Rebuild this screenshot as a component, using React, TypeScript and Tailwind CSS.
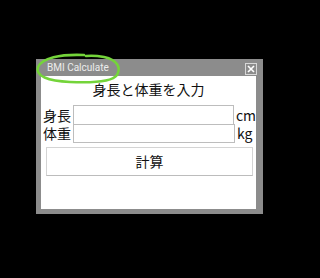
import React from 'react'

const jp = { fontFamily: '"Noto Sans CJK JP", "Noto Sans", sans-serif' }

function Scribble() {
  // hand-drawn highlight around the window title
  return (
    <svg className="absolute left-0 top-0 pointer-events-none" width="320" height="278" viewBox="0 0 320 278">
      <path
        d="M84 55 C 60 54, 42 58, 38 67 C 35 76, 48 81, 70 82 C 92 83, 112 82, 117 75 C 121 68, 118 60, 104 57 C 96 55.5, 90 55.5, 86 56"
        fill="none"
        stroke="#74d43a"
        strokeWidth="2.6"
        strokeLinecap="round"
      />
    </svg>
  )
}

function Row({ label, unit }: { label: string; unit: string }) {
  return (
    <div className="flex h-full items-stretch">
      <div className="w-[32px] pl-[2px] flex items-center text-[14px] leading-[17px] text-[#111]">{label}</div>
      <div className="w-[162px] border border-[#bdbdbd] bg-white" />
      <div className="pl-[2px] flex items-center text-[14px] leading-[17px] text-[#111]">{unit}</div>
    </div>
  )
}

export default function App() {
  return (
    <div className="relative w-[320px] h-[278px] bg-black overflow-hidden pt-[59px] pl-[36px]" style={jp}>
      <div className="w-[227px] h-[155px] bg-[#8c8c8c] flex flex-col">
        <div className="h-[17px] flex items-center justify-between pl-[11px] pr-[6px]">
          <span className="text-[10px] text-[#ececec]" style={{ fontFamily: 'Roboto, "Noto Sans", sans-serif' }}>
            BMI Calculate
          </span>
          <div className="w-[12px] h-[12px] mt-[3px] border border-[#d8d8d8] flex items-center justify-center">
            <svg width="8" height="8" viewBox="0 0 8 8">
              <path d="M1 1 L7 7 M7 1 L1 7" stroke="#fff" strokeWidth="1.6" />
            </svg>
          </div>
        </div>
        <div className="flex-1 ml-[5px] mr-[7px] mb-[5px] bg-white flex flex-col">
          <div className="mt-[5px] text-center text-[14px] leading-[17px] text-[#111]">身長と体重を入力</div>
          <div className="mt-[7px] h-[20px]">
            <Row label="身長" unit="cm" />
          </div>
          <div className="-mt-px h-[19px]">
            <Row label="体重" unit="kg" />
          </div>
          <button className="mt-[4px] ml-[5px] w-[207px] h-[29px] border border-[#d4d4d4] border-b-[#bcbcbc] bg-white text-[14px] text-[#111]">
            計算
          </button>
        </div>
      </div>
      <Scribble />
    </div>
  )
}
